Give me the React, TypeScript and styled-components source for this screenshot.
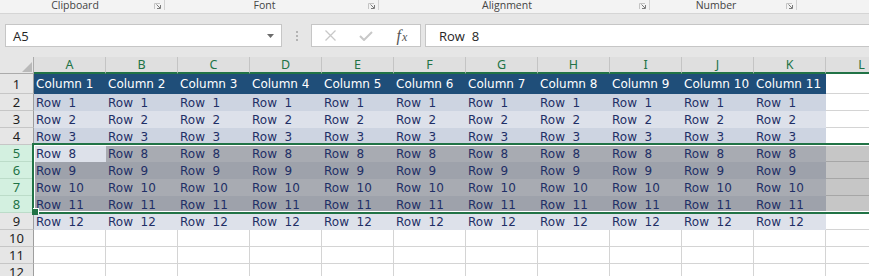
import React from 'react';
import styled, { createGlobalStyle } from 'styled-components';

const GlobalStyle = createGlobalStyle`
  html, body { margin: 0; padding: 0; }
  body { background: #e6e6e6; overflow: hidden; }
`;

const Page = styled.div`
  width: 869px;
  height: 276px;
  overflow: hidden;
  background: #e6e6e6;
  display: flex;
  flex-direction: column;
`;

/* ---------- ribbon strip ---------- */
const Ribbon = styled.div`
  height: 14px;
  box-sizing: border-box;
  border-bottom: 1px solid #d5d5d5;
  background: #f3f3f3;
  display: flex;
  align-items: flex-start;
  font-family: "Open Sans", "Noto Sans", sans-serif;
  font-size: 11px;
  color: #444;
  flex: 0 0 auto;
`;

const RibbonGroup = styled.div<{ $w?: number }>`
  width: ${(p) => (p.$w ? `${p.$w}px` : 'auto')};
  flex: ${(p) => (p.$w ? '0 0 auto' : '1 1 auto')};
  height: 10px;
  box-sizing: border-box;
  display: flex;
  border-right: ${(p) => (p.$w ? '1px solid #d2d2d2' : 'none')};
`;

const GroupLabel = styled.div`
  flex: 1;
  text-align: center;
  font-size: 10.5px;
  line-height: 11px;
  padding-top: 0px;
  white-space: nowrap;
`;

const LauncherBox = styled.div`
  width: 14px;
  box-sizing: border-box;
  padding: 3px 0 0 4px;
  display: flex;
  align-items: flex-start;
`;

const Launcher = () => (
  <LauncherBox>
    <svg width="7" height="6" viewBox="0 0 7 6">
      <path d="M0.5 6V0.5H6" stroke="#c4c4c4" fill="none" />
      <path d="M2.5 1.5L6 5" stroke="#7a7a7a" fill="none" />
      <path d="M3 5.5H6.5V2" stroke="#7a7a7a" fill="none" />
    </svg>
  </LauncherBox>
);

/* ---------- formula bar ---------- */
const FormulaBar = styled.div`
  display: flex;
  align-items: stretch;
  height: 23px;
  margin: 10px -4px 10px 5px;
  flex: 0 0 auto;
  font-family: "Open Sans", "Noto Sans", sans-serif;
  font-size: 13px;
  color: #262626;
`;

const Field = styled.div`
  background: #fff;
  border: 1px solid #c6c6c6;
  box-sizing: border-box;
  display: flex;
  align-items: center;
`;

const NameBox = styled(Field)`
  width: 277px;
  padding: 0 7px 0 7px;
  justify-content: space-between;
`;

const Grip = styled.div`
  width: 29px;
  display: flex;
  flex-direction: column;
  align-items: center;
  justify-content: center;
  gap: 2px;
`;

const GripDot = styled.span`
  width: 2px;
  height: 2px;
  background: #b3b3b3;
`;

const FxBox = styled(Field)`
  width: 110px;
`;

const FxButton = styled.div`
  flex: 1;
  display: flex;
  align-items: center;
  justify-content: center;
  height: 100%;
`;

const FxLetters = styled.span`
  font-family: "Liberation Serif", "DejaVu Serif", serif;
  font-style: italic;
  color: #555;
  font-size: 16px;
  line-height: 1;
  & > small {
    font-size: 12px;
    margin-left: 1px;
  }
`;

const FormulaInput = styled(Field)`
  flex: 1;
  margin-left: 4px;
  padding-left: 13px;
  white-space: pre;
`;

/* ---------- sheet ---------- */
const Sheet = styled.div`
  position: relative;
  display: grid;
  grid-template-columns: 34px repeat(12, 72px);
  grid-template-rows: 17px 20px repeat(11, 17px);
  width: 898px;
  background: #fff;
`;

const Corner = styled.div`
  background: #e6e6e6;
  border-right: 1px solid #ababab;
  border-bottom: 1px solid #ababab;
  box-sizing: border-box;
  display: flex;
  align-items: flex-end;
  justify-content: flex-end;
  padding: 0 1px 1px 0;
`;

const ColHead = styled.div`
  background: #dfdfdf;
  border-right: 1px solid #c4c4c4;
  border-bottom: 2px solid #217346;
  box-sizing: border-box;
  color: #217346;
  font-family: "Noto Sans", "Open Sans", sans-serif;
  font-size: 12.5px;
  line-height: 15px;
  text-align: center;
`;

const RowHead = styled.div<{ $sel?: boolean }>`
  background: ${(p) => (p.$sel ? '#d3f0e0' : '#e6e6e6')};
  border-right: 1px solid ${(p) => (p.$sel ? '#217346' : '#9e9e9e')};
  border-bottom: 1px solid ${(p) => (p.$sel ? '#bcdcc9' : '#c6c6c6')};
  box-sizing: border-box;
  color: ${(p) => (p.$sel ? '#217346' : '#1e1e1e')};
  font-family: "Noto Sans", "Open Sans", sans-serif;
  font-size: 13px;
  display: flex;
  align-items: center;
  justify-content: center;
`;

type Tone = 'head' | 'band1' | 'band2' | 'empty';

const TONES: Record<Tone, { bg: string; sel: string; line: string; selLine: string }> = {
  head: { bg: '#1f4e79', sel: '#1f4e79', line: '#1f4e79', selLine: '#1f4e79' },
  band1: { bg: '#cdd4e1', sel: '#9ea2ab', line: '#cdd4e1', selLine: '#9ea2ab' },
  band2: { bg: '#dde1ea', sel: '#a8abb2', line: '#dde1ea', selLine: '#a8abb2' },
  empty: { bg: '#ffffff', sel: '#c6c6c6', line: '#d4d4d4', selLine: '#a6a6a6' },
};

const Cell = styled.div<{ $tone: Tone; $sel?: boolean; $pt?: number }>`
  background: ${(p) => (p.$sel ? TONES[p.$tone].sel : TONES[p.$tone].bg)};
  border-right: 1px solid ${(p) => (p.$sel ? TONES[p.$tone].selLine : TONES[p.$tone].line)};
  border-bottom: 1px solid ${(p) => (p.$sel ? TONES[p.$tone].selLine : TONES[p.$tone].line)};
  box-sizing: border-box;
  color: ${(p) => (p.$tone === 'head' ? '#ffffff' : '#1f2f66')};
  font-family: "DejaVu Sans", Verdana, sans-serif;
  font-size: 12px;
  line-height: 16px;
  padding: ${(p) => p.$pt ?? 1}px 0 0 2px;
  white-space: pre;
  overflow: visible;
`;

const Selection = styled.div`
  position: absolute;
  top: 86px;
  left: 32px;
  width: 880px;
  height: 71px;
  box-sizing: border-box;
  border: 2px solid #217346;
  box-shadow: inset 0 0 0 1px #ffffff;
  pointer-events: none;
`;

const FillHandle = styled.div`
  position: absolute;
  left: -2px;
  bottom: -3px;
  width: 6px;
  height: 6px;
  background: #217346;
  box-shadow: 1px -1px 0 #ffffff;
`;

const COLS = ['A', 'B', 'C', 'D', 'E', 'F', 'G', 'H', 'I', 'J', 'K', 'L'];

type RowDef = { n: number; tone: Tone | null; text: string | null; sel?: boolean; pt?: number };

const ROWS: RowDef[] = [
  { n: 1, tone: 'head', text: null, pt: 2 },
  { n: 2, tone: 'band1', text: 'Row  1' },
  { n: 3, tone: 'band2', text: 'Row  2' },
  { n: 4, tone: 'band1', text: 'Row  3' },
  { n: 5, tone: 'band2', text: 'Row  8', sel: true },
  { n: 6, tone: 'band1', text: 'Row  9', sel: true },
  { n: 7, tone: 'band2', text: 'Row  10', sel: true },
  { n: 8, tone: 'band1', text: 'Row  11', sel: true },
  { n: 9, tone: 'band2', text: 'Row  12' },
  { n: 10, tone: null, text: null },
  { n: 11, tone: null, text: null },
  { n: 12, tone: null, text: null },
];

const RIBBON = [
  { label: 'Clipboard', w: 165 },
  { label: 'Font', w: 214 },
  { label: 'Alignment', w: 271 },
  { label: 'Number', w: 147 },
];

export default function App() {
  return (
    <Page>
      <GlobalStyle />
      <Ribbon>
        {RIBBON.map((g) => (
          <RibbonGroup key={g.label} $w={g.w}>
            <GroupLabel>{g.label}</GroupLabel>
            <Launcher />
          </RibbonGroup>
        ))}
        <RibbonGroup />
      </Ribbon>

      <FormulaBar>
        <NameBox>
          <span>A5</span>
          <svg width="7" height="4" viewBox="0 0 7 4">
            <polygon points="0,0 7,0 3.5,4" fill="#6b6b6b" />
          </svg>
        </NameBox>
        <Grip>
          <GripDot />
          <GripDot />
          <GripDot />
        </Grip>
        <FxBox>
          <FxButton>
            <svg width="11" height="11" viewBox="0 0 11 11">
              <path d="M0.5 0.5L10.5 10.5M10.5 0.5L0.5 10.5" stroke="#c8c8c8" strokeWidth="1.3" />
            </svg>
          </FxButton>
          <FxButton>
            <svg width="14" height="10" viewBox="0 0 14 10">
              <path d="M1 5L5 9L13 1" stroke="#c8c8c8" strokeWidth="2" fill="none" />
            </svg>
          </FxButton>
          <FxButton>
            <FxLetters>
              f<small>x</small>
            </FxLetters>
          </FxButton>
        </FxBox>
        <FormulaInput>{'Row  8'}</FormulaInput>
      </FormulaBar>

      <Sheet>
        <Corner>
          <svg width="10" height="10" viewBox="0 0 10 10">
            <polygon points="10,0 10,10 0,10" fill="#b9b9b9" />
          </svg>
        </Corner>
        {COLS.map((c) => (
          <ColHead key={c}>{c}</ColHead>
        ))}
        {ROWS.map((r) => (
          <React.Fragment key={r.n}>
            <RowHead $sel={r.sel}>{r.n}</RowHead>
            {COLS.map((c, i) => {
              const inTable = r.tone !== null && i < 11;
              const tone: Tone = inTable ? (r.tone as Tone) : 'empty';
              const active = r.n === 5 && i === 0;
              const text = !inTable ? '' : r.tone === 'head' ? `Column ${i + 1}` : r.text;
              return (
                <Cell key={c} $tone={tone} $sel={r.sel && !active} $pt={r.pt}>
                  {text}
                </Cell>
              );
            })}
          </React.Fragment>
        ))}
        <Selection>
          <FillHandle />
        </Selection>
      </Sheet>
    </Page>
  );
}
